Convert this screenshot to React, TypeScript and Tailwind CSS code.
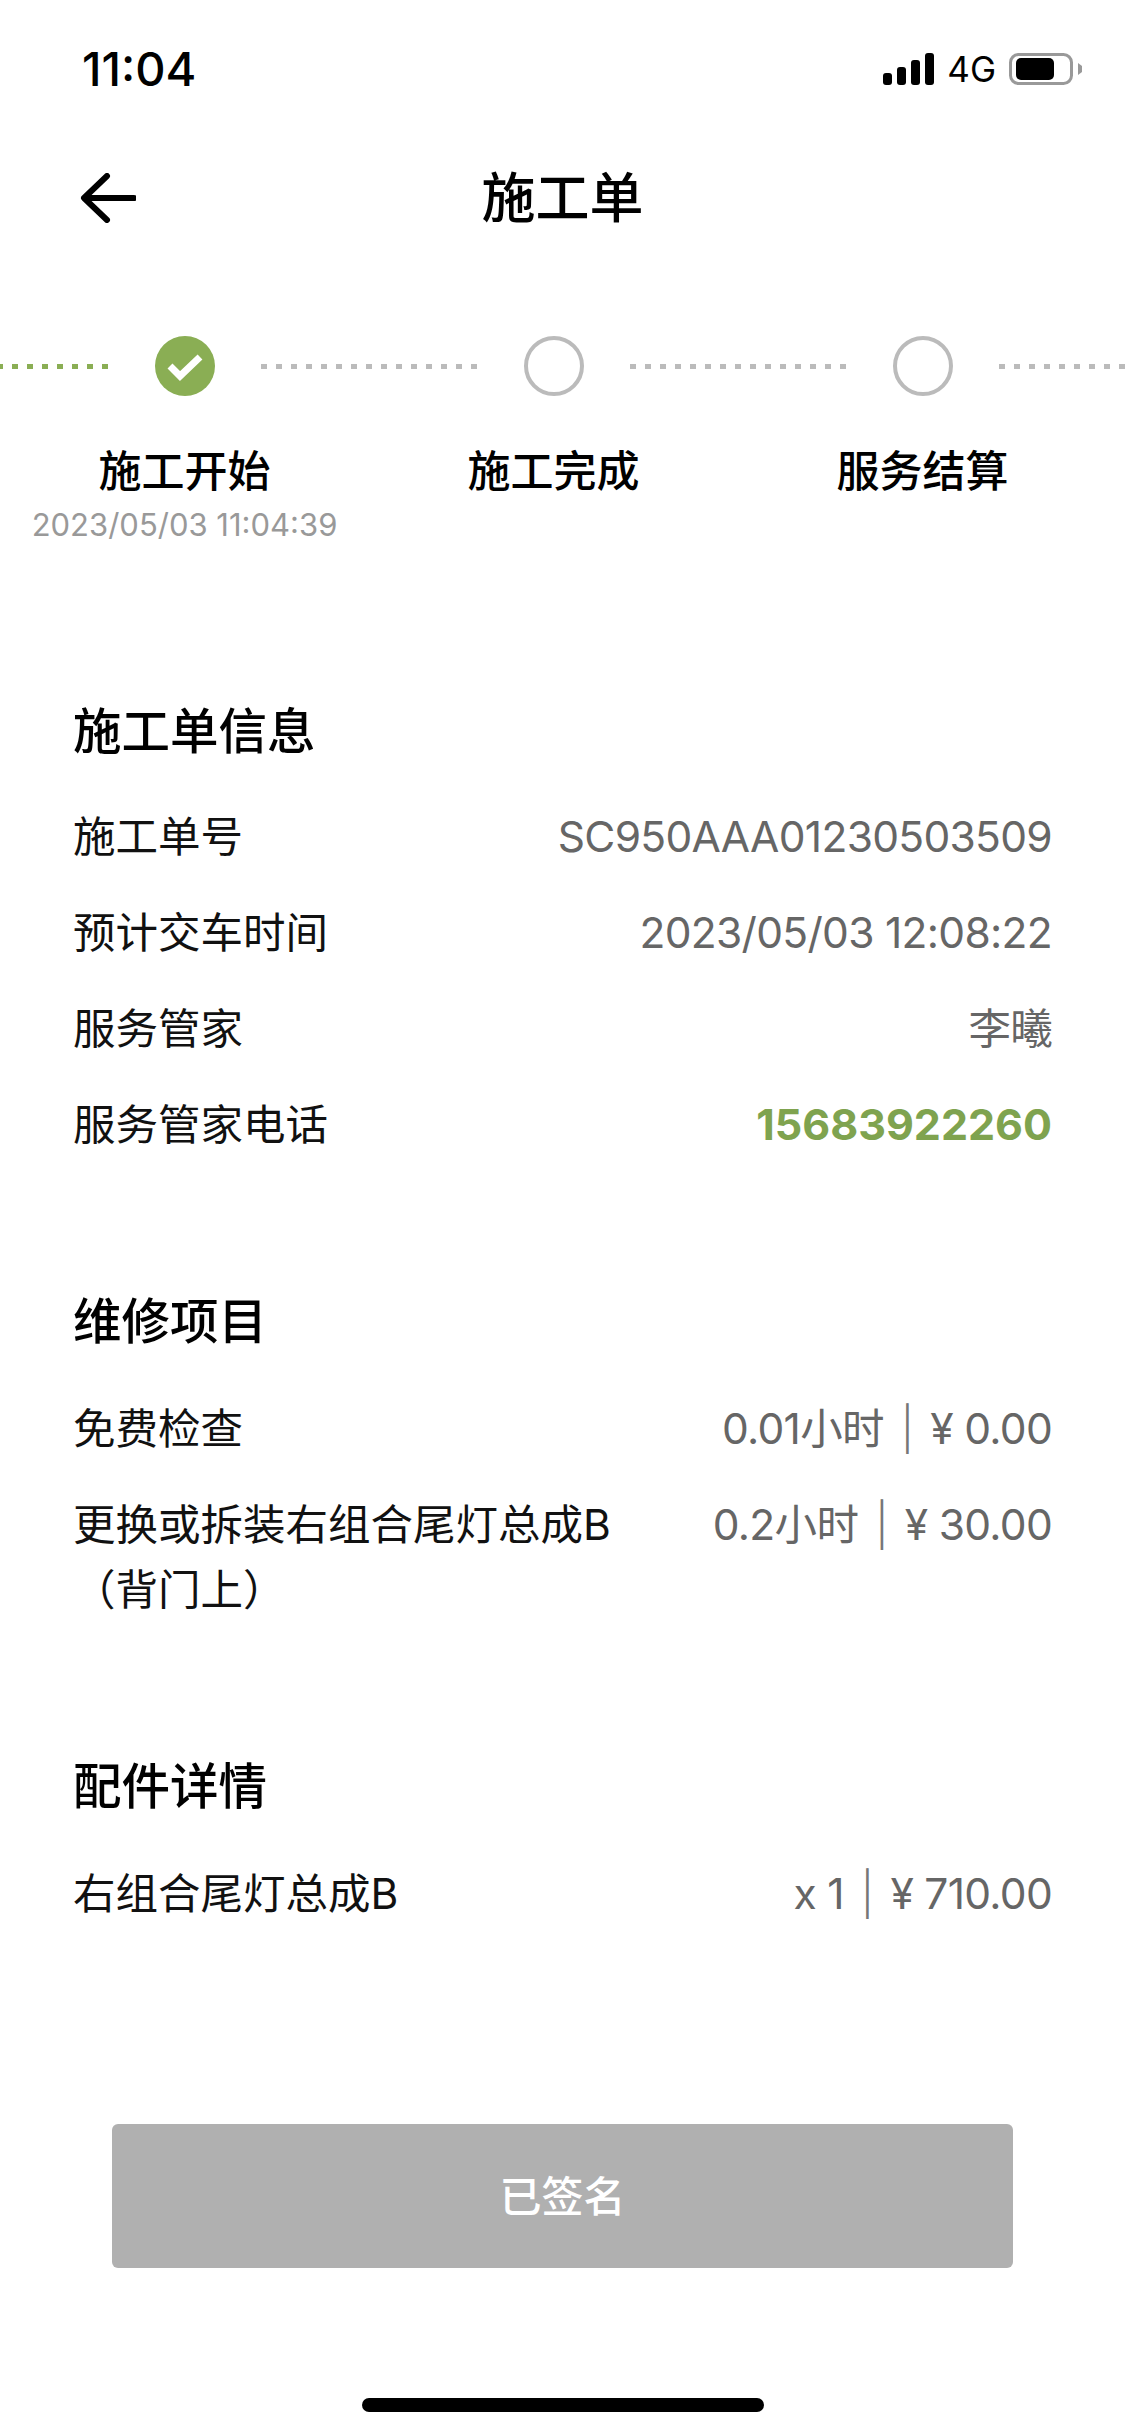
import React from "react";

const font = "font-['Inter','Noto_Sans_CJK_SC',sans-serif]";

function Row({ label, value, valueClass }: { label: React.ReactNode; value: React.ReactNode; valueClass?: string }) {
  return (
    <div className="flex justify-between items-start mt-[31px] first:mt-0 text-[42.5px] leading-[65px]">
      <div className="text-[#111] max-w-[560px]">{label}</div>
      <div className={valueClass ?? "text-[#666] tracking-[-0.7px]"}>{value}</div>
    </div>
  );
}

function Sep() {
  return <span className="mx-[17px] font-light text-[#777]">|</span>;
}

function Step({ label, time, done }: { label: string; time?: string; done?: boolean }) {
  return (
    <div className="w-[369px] flex flex-col items-center shrink-0">
      <div className="mt-[2px]">
        {done ? (
          <svg width="60" height="60" viewBox="0 0 60 60" className="block">
            <circle cx="30" cy="30" r="30" fill="#8aae54" />
            <path d="M15 30l10 10 20-19" fill="none" stroke="#fff" strokeWidth="7" />
          </svg>
        ) : (
          <div className="w-[60px] h-[60px] rounded-full border-[4px] border-[#bbb] bg-white" />
        )}
      </div>
      <div className="mt-[48px] text-[43px] leading-[54px] text-[#000] font-medium">{label}</div>
      {time && <div className="text-[31px] leading-[36px] mt-[9px] text-[#999] whitespace-nowrap">{time}</div>}
    </div>
  );
}

function Dots({ className }: { className: string }) {
  return <div className={`absolute top-[30px] h-[5px] ${className}`} />;
}

export default function App() {
  return (
    <div className={`${font} w-[1125px] h-[2436px] bg-white flex flex-col overflow-hidden relative`}>
      <div className="h-[136px] flex items-center justify-between pl-[82px] pr-[43px] pt-[2px]">
        <span className="text-[47px] font-medium text-[#000]">11:04</span>
        <div className="flex items-center gap-[13px]">
          <svg width="51" height="32" viewBox="0 0 51 32" className="block">
            <rect x="0" y="20" width="9" height="12" rx="3" fill="#000" />
            <rect x="14" y="14" width="9" height="18" rx="3" fill="#000" />
            <rect x="28" y="7" width="9" height="25" rx="3" fill="#000" />
            <rect x="42" y="0" width="9" height="32" rx="3" fill="#000" />
          </svg>
          <span className="text-[35px] leading-[40px] text-[#000]">4G</span>
          <svg width="73" height="32" viewBox="0 0 73 32" className="block">
            <rect x="1.5" y="1.5" width="61" height="29" rx="8" fill="none" stroke="#999" strokeWidth="3" />
            <rect x="7" y="5" width="38" height="22" rx="5" fill="#000" />
            <path d="M69 10l4 3v6l-4 3z" fill="#999" />
          </svg>
        </div>
      </div>
      <div className="relative h-[124px] flex items-center justify-center">
        <svg className="absolute left-[80px] top-[37px]" width="56" height="50" viewBox="0 0 56 50">
          <path d="M54 25H5M27 3L4 25l23 22" fill="none" stroke="#000" strokeWidth="6" strokeLinecap="round" strokeLinejoin="round" />
        </svg>
        <span className="text-[54px] font-medium text-[#000]">施工单</span>
      </div>
      <div className="relative mt-[74px] h-[210px] flex">
        <Dots className="left-[-3px] w-[111px] bg-[repeating-linear-gradient(90deg,#8aae54_0,#8aae54_6px,transparent_6px,transparent_15px)]" />
        <Dots className="left-[261px] w-[217px] bg-[repeating-linear-gradient(90deg,#bbb_0,#bbb_6px,transparent_6px,transparent_15px)]" />
        <Dots className="left-[630px] w-[217px] bg-[repeating-linear-gradient(90deg,#bbb_0,#bbb_6px,transparent_6px,transparent_15px)]" />
        <Dots className="left-[999px] w-[126px] bg-[repeating-linear-gradient(90deg,#bbb_0,#bbb_6px,transparent_6px,transparent_15px)]" />
        <Step label="施工开始" time="2023/05/03 11:04:39" done />
        <Step label="施工完成" />
        <Step label="服务结算" />
      </div>
      <div className="px-[73px]">
        <div className="mt-[158px]">
          <h2 className="text-[48.5px] leading-[60px] mb-[42px] font-medium text-[#000]">施工单信息</h2>
          <Row label="施工单号" value="SC950AAA01230503509" />
          <Row label="预计交车时间" value="2023/05/03 12:08:22" />
          <Row label="服务管家" value="李曦" />
          <Row label="服务管家电话" value="15683922260" valueClass="text-[#7fa34f] font-bold text-[43px]" />
        </div>
        <div className="mt-[135px]">
          <h2 className="text-[48.5px] leading-[60px] mb-[44px] font-medium text-[#000]">维修项目</h2>
          <Row label="免费检查" value={<>0.01小时<Sep />¥ 0.00</>} />
          <Row label={<>更换或拆装右组合尾灯总成B<br />（背门上）</>} value={<>0.2小时<Sep />¥ 30.00</>} />
        </div>
        <div className="mt-[135px]">
          <h2 className="text-[48.5px] leading-[60px] mb-[44px] font-medium text-[#000]">配件详情</h2>
          <Row label="右组合尾灯总成B" value={<>x 1<Sep />¥ 710.00</>} />
        </div>
      </div>
      <div className="mx-[112px] mt-[198px] h-[144px] rounded-[6px] bg-[#b0b0b0] flex items-center justify-center text-[42px] font-medium text-white">已签名</div>
      <div className="absolute bottom-[24px] left-[362px] w-[402px] h-[14px] rounded-full bg-black" />
    </div>
  );
}
